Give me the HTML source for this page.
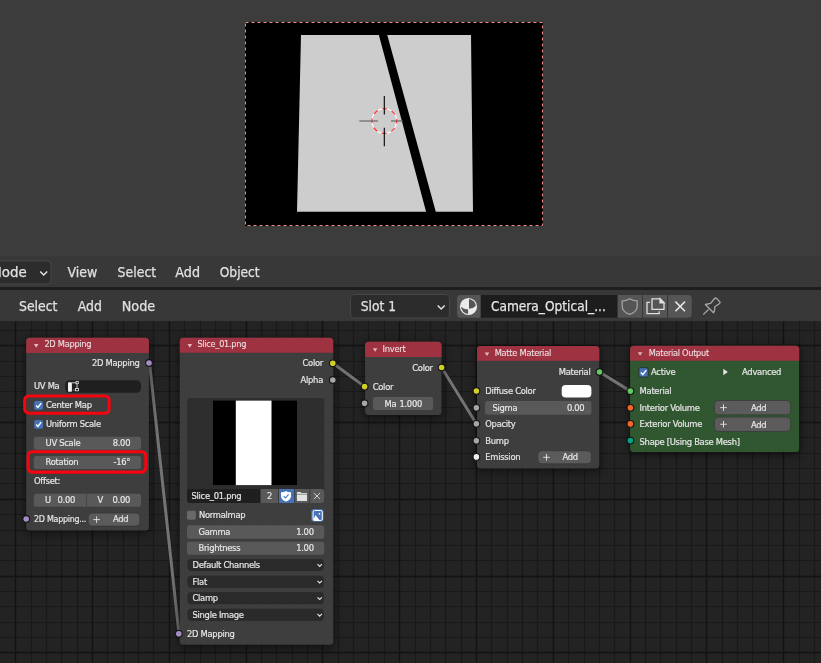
<!DOCTYPE html>
<html><head><meta charset="utf-8"><title>Blender node editor</title>
<style>
html,body{margin:0;padding:0;background:#232323;}
body{width:821px;height:663px;overflow:hidden;}
svg{display:block;will-change:transform;}
text{font-family:"DejaVu Sans", "Liberation Sans", sans-serif;}
text.c{font-family:"DejaVu Sans Condensed", "DejaVu Sans", "Liberation Sans", sans-serif;letter-spacing:-0.28px;stroke:#e6e6e6;stroke-width:0.2px;}
</style></head><body>
<svg width="821" height="663" viewBox="0 0 821 663">
<defs>
<filter id="sh" x="-20%" y="-20%" width="140%" height="140%"><feGaussianBlur stdDeviation="4"/></filter>
<clipPath id="ne"><rect x="0" y="321" width="821" height="342"/></clipPath>
</defs>

<rect x="0" y="0" width="821" height="256" fill="#3c3c3c"/>
<rect x="245" y="22" width="298" height="204" fill="#000000"/>
<polygon points="301,35 471,35 473,211.700 297,211.700" fill="#cdcdcd"/>
<polygon points="378.600,34 387,34 436,212.500 426.300,212.500" fill="#000"/>
<rect x="245.500" y="22.500" width="297" height="203" fill="none" stroke="#f48888" stroke-width="1" stroke-dasharray="3 3"/>
<g fill="none" stroke-width="1.1"><circle cx="384.3" cy="121.0" r="12.4" stroke="#ffffff"/><circle cx="384.3" cy="121.0" r="12.4" stroke="#ff2a2a" stroke-dasharray="4.87 4.87" stroke-dashoffset="2.4"/>
<path d="M384.3 96V114.5M384.3 127.7V146.2" stroke="#000"/><path d="M359.3 121.0H378M391 121.0H403" stroke="#555"/></g>
<rect x="0" y="256" width="821" height="31" fill="#383838"/>
<rect x="0" y="287" width="821" height="3" fill="#1e1e1e"/>
<rect x="0" y="290" width="821" height="31" fill="#383838"/>
<rect x="-10" y="261" width="61" height="23" rx="4" fill="#2c2c2c" stroke="#464646" stroke-width="1"/>
<text x="-9.8" y="276.8" font-size="14" fill="#e0e0e0" textLength="36.6" lengthAdjust="spacingAndGlyphs" stroke="#e0e0e0" stroke-width="0.25">Mode</text>
<path d="M40.200 271.400L43.700 275L47.200 271.400" fill="none" stroke="#e0e0e0" stroke-width="1.5"/>
<text x="67.5" y="276.8" font-size="14" fill="#e0e0e0" textLength="29.9" lengthAdjust="spacingAndGlyphs" stroke="#e0e0e0" stroke-width="0.25">View</text>
<text x="117.6" y="276.8" font-size="14" fill="#e0e0e0" textLength="38.6" lengthAdjust="spacingAndGlyphs" stroke="#e0e0e0" stroke-width="0.25">Select</text>
<text x="175.3" y="276.8" font-size="14" fill="#e0e0e0" textLength="24.7" lengthAdjust="spacingAndGlyphs" stroke="#e0e0e0" stroke-width="0.25">Add</text>
<text x="219.7" y="276.8" font-size="14" fill="#e0e0e0" textLength="40.0" lengthAdjust="spacingAndGlyphs" stroke="#e0e0e0" stroke-width="0.25">Object</text>
<text x="19" y="310.9" font-size="14" fill="#e0e0e0" textLength="38.4" lengthAdjust="spacingAndGlyphs" stroke="#e0e0e0" stroke-width="0.25">Select</text>
<text x="77.7" y="310.9" font-size="14" fill="#e0e0e0" textLength="24.3" lengthAdjust="spacingAndGlyphs" stroke="#e0e0e0" stroke-width="0.25">Add</text>
<text x="121.7" y="310.9" font-size="14" fill="#e0e0e0" textLength="33.5" lengthAdjust="spacingAndGlyphs" stroke="#e0e0e0" stroke-width="0.25">Node</text>
<rect x="350.500" y="294.500" width="99" height="23.500" rx="4" fill="#2c2c2c" stroke="#464646" stroke-width="1"/>
<text x="360.7" y="310.9" font-size="14" fill="#e0e0e0" textLength="35.3" lengthAdjust="spacingAndGlyphs" stroke="#e0e0e0" stroke-width="0.25">Slot 1</text>
<path d="M437.700 305.400L441.200 309L444.700 305.400" fill="none" stroke="#e0e0e0" stroke-width="1.5"/>
<path d="M461 295H480.400V317.700H461a4 4 0 0 1 -4 -4V299a4 4 0 0 1 4 -4z" fill="#555555"/>
<rect x="481" y="295" width="136.2" height="22.7" fill="#1d1d1d"/>
<rect x="617.9" y="295" width="24.1" height="22.7" fill="#555555"/>
<rect x="643" y="295" width="24" height="22.7" fill="#555555"/>
<path d="M668.100 295H687.800a4 4 0 0 1 4 4V313.700a4 4 0 0 1 -4 4H668.100z" fill="#555555"/>
<text x="490.9" y="310.9" font-size="14" fill="#e6e6e6" textLength="115" lengthAdjust="spacingAndGlyphs" stroke="#e0e0e0" stroke-width="0.25">Camera_Optical_...</text>
<g><circle cx="468.500" cy="306.500" r="8.600" fill="#ebebeb"/><path d="M469 299V308.800Q473.500 308.600 475.900 305.800A7.500 7.500 0 0 0 469 299z" fill="#555555"/><path d="M468.100 313.900V309.500Q463.500 309.300 461.100 306.700A7.500 7.500 0 0 0 468.100 313.900z" fill="#555555"/></g>
<path d="M629.700 298.700C627.500 300.300 624.800 300.900 622.200 300.900V306C622.200 310 625.500 313 629.700 314.300C633.900 313 637.200 310 637.200 306V300.900C634.600 300.900 631.900 300.300 629.700 298.700z" fill="none" stroke="#a2a2a2" stroke-width="1.300"/>
<g fill="none" stroke="#e0e0e0" stroke-width="1.300"><path d="M652 298.900H660L664 302.900V309.300H652z"/><path d="M660 298.900V302.900H664z" fill="#e0e0e0"/><path d="M650 302.400H647V313.700H659.200V311.300"/></g>
<path d="M675.400 301.600L685 311.200M685 301.600L675.400 311.200" stroke="#e6e6e6" stroke-width="1.500" fill="none"/>
<path d="M705.400 304.500L710.600 303.400L714.600 298.500Q715.500 297.600 716.400 298.200L719.900 301.900Q720.500 302.800 719.600 303.500L714.800 306.800L714.400 311.200L713.500 312.700zM708.500 309.500L703.200 314.600" fill="none" stroke="#a8a8a8" stroke-width="1.300" stroke-linejoin="round"/>
<rect x="0" y="321" width="821" height="342" fill="#232323"/>
<path d="M31.5 321V663M46.5 321V663M61.5 321V663M77.5 321V663M107.5 321V663M123.5 321V663M138.5 321V663M153.5 321V663M184.5 321V663M200.5 321V663M215.5 321V663M230.5 321V663M261.5 321V663M276.5 321V663M292.5 321V663M307.5 321V663M338.5 321V663M353.5 321V663M368.5 321V663M384.5 321V663M415.5 321V663M430.5 321V663M445.5 321V663M461.5 321V663M491.5 321V663M507.5 321V663M522.5 321V663M537.5 321V663M568.5 321V663M584.5 321V663M599.5 321V663M614.5 321V663M645.5 321V663M660.5 321V663M676.5 321V663M691.5 321V663M722.5 321V663M737.5 321V663M752.5 321V663M768.5 321V663M799.5 321V663M814.5 321V663M0 330.5H821M0 361.5H821M0 376.5H821M0 391.5H821M0 407.5H821M0 437.5H821M0 453.5H821M0 468.5H821M0 483.5H821M0 514.5H821M0 530.5H821M0 545.5H821M0 560.5H821M0 591.5H821M0 606.5H821M0 622.5H821M0 637.5H821" stroke="#191919" stroke-width="1.2" fill="none"/>
<path d="M15.5 321V663M92.5 321V663M169.5 321V663M246.5 321V663M322.5 321V663M399.5 321V663M476.5 321V663M553.5 321V663M630.5 321V663M706.5 321V663M783.5 321V663M0 345.5H821M0 422.5H821M0 499.5H821M0 576.5H821M0 652.5H821" stroke="#131313" stroke-width="1.4" fill="none"/>
<g clip-path="url(#ne)">
<path d="M149.5 363L179 633.5" stroke="#1c1c1c" stroke-width="4.400" fill="none" stroke-linecap="round" opacity="0.45"/>
<path d="M149.5 363L179 633.5" stroke="#747474" stroke-width="3" fill="none" stroke-linecap="round"/>
<path d="M333 363.3L364.6 386.6" stroke="#1c1c1c" stroke-width="4.400" fill="none" stroke-linecap="round" opacity="0.45"/>
<path d="M333 363.3L364.6 386.6" stroke="#747474" stroke-width="3" fill="none" stroke-linecap="round"/>
<path d="M441.6 367.5L476.4 423.8" stroke="#1c1c1c" stroke-width="4.400" fill="none" stroke-linecap="round" opacity="0.45"/>
<path d="M441.6 367.5L476.4 423.8" stroke="#747474" stroke-width="3" fill="none" stroke-linecap="round"/>
<path d="M599.5 372L630.4 391.1" stroke="#1c1c1c" stroke-width="4.400" fill="none" stroke-linecap="round" opacity="0.45"/>
<path d="M599.5 372L630.4 391.1" stroke="#747474" stroke-width="3" fill="none" stroke-linecap="round"/>
<rect x="25.2" y="338.7" width="124.7" height="194.7" rx="5" fill="#000" opacity="0.5" filter="url(#sh)"/>
<rect x="26.2" y="337.7" width="122.7" height="192.7" rx="3.5" fill="#424242" opacity="0.93"/>
<path d="M26.2 352.9V341.2a3.5 3.5 0 0 1 3.5 -3.5H145.4a3.5 3.5 0 0 1 3.5 3.5V352.9z" fill="#9e3240"/>
<path d="M33.900000000000006 344.1H38.5L36.2 347.7z" fill="#e0b8bd"/>
<text x="44.4" y="347.0" font-size="9.3" fill="#eedfe1" textLength="46.9" lengthAdjust="spacingAndGlyphs" class="c" style="stroke-width:0.1px">2D Mapping</text>
<text x="139.5" y="365.8" font-size="9.3" fill="#e6e6e6" text-anchor="end" class="c">2D Mapping</text>
<circle cx="149" cy="363" r="3.350" fill="#a68cc4" stroke="#151515" stroke-width="1.100"/>
<text x="34" y="389.1" font-size="9.3" fill="#e6e6e6" class="c">UV Ma</text>
<rect x="65" y="380.2" width="76" height="12.5" fill="#1f1f1f" rx="4.5"/>
<g><rect x="68" y="382.300" width="3.900" height="9.500" rx="0.800" fill="#f0f0f0"/><path d="M71.900 382.800H77V389" fill="none" stroke="#e0e0e0" stroke-width="0.900"/><rect x="76" y="381.400" width="2.300" height="2.300" fill="#1f1f1f" stroke="#e6e6e6" stroke-width="0.800"/><rect x="75.400" y="388.500" width="3" height="2.300" fill="#1f1f1f" stroke="#e6e6e6" stroke-width="0.800"/><path d="M72.800 390H74.800" stroke="#a0a0a0" stroke-width="0.800"/></g>
<rect x="34.2" y="400.9" width="8.8" height="8.8" fill="#4772b3" rx="1.8"/>
<path d="M36.10 405.50L37.90 407.40L41.20 403.20" fill="none" stroke="#fff" stroke-width="1.4"/>
<text x="46" y="407.7" font-size="9.3" fill="#e6e6e6" class="c">Center Map</text>
<rect x="34.2" y="420" width="8.8" height="8.8" fill="#4772b3" rx="1.8"/>
<path d="M36.10 424.60L37.90 426.50L41.20 422.30" fill="none" stroke="#fff" stroke-width="1.4"/>
<text x="46" y="426.6" font-size="9.3" fill="#e6e6e6" class="c">Uniform Scale</text>
<rect x="33.8" y="436.8" width="107.2" height="13" fill="#595959" rx="2.5"/>
<text x="45.599999999999994" y="446.1" font-size="9.3" fill="#e6e6e6" class="c">UV Scale</text>
<text x="130.2" y="446.1" font-size="9.3" fill="#e6e6e6" text-anchor="end" class="c">8.00</text>
<rect x="33.8" y="455.9" width="107.2" height="13" fill="#595959" rx="2.5"/>
<text x="45.599999999999994" y="465.2" font-size="9.3" fill="#e6e6e6" class="c">Rotation</text>
<text x="130.2" y="465.2" font-size="9.3" fill="#e6e6e6" text-anchor="end" class="c">-16°</text>
<text x="34" y="483.6" font-size="9.3" fill="#e6e6e6" class="c">Offset:</text>
<path d="M36.300 493.800H86.200V506.800H36.300a2.500 2.500 0 0 1 -2.500 -2.500V496.300a2.500 2.500 0 0 1 2.500 -2.500z" fill="#595959"/>
<path d="M86.900 493.800H138.500a2.500 2.500 0 0 1 2.500 2.500V504.300a2.500 2.500 0 0 1 -2.500 2.500H86.900z" fill="#595959"/>
<text x="45" y="502.6" font-size="9.3" fill="#e6e6e6" class="c">U</text>
<text x="75" y="502.6" font-size="9.3" fill="#e6e6e6" text-anchor="end" class="c">0.00</text>
<text x="97.5" y="502.6" font-size="9.3" fill="#e6e6e6" class="c">V</text>
<text x="130" y="502.6" font-size="9.3" fill="#e6e6e6" text-anchor="end" class="c">0.00</text>
<circle cx="26.2" cy="519" r="3.350" fill="#a68cc4" stroke="#151515" stroke-width="1.100"/>
<text x="34" y="521.6" font-size="9.3" fill="#e6e6e6" textLength="52" lengthAdjust="spacingAndGlyphs" class="c">2D Mapping...</text>
<rect x="88.2" y="513.1" width="51.7" height="13" fill="#5b5b5b" rx="4" stroke="#303030" stroke-width="0.6"/>
<path d="M93.3 519.6H99.89999999999999M96.6 516.3000000000001V522.9" stroke="#e6e6e6" stroke-width="0.9" fill="none"/>
<text x="113" y="522.2" font-size="9.3" fill="#e6e6e6" class="c">Add</text>
<rect x="178.8" y="338.7" width="155.4" height="309" rx="5" fill="#000" opacity="0.5" filter="url(#sh)"/>
<rect x="179.8" y="337.7" width="153.4" height="307" rx="3.5" fill="#424242" opacity="0.93"/>
<path d="M179.8 352.7V341.2a3.5 3.5 0 0 1 3.5 -3.5H329.70000000000005a3.5 3.5 0 0 1 3.5 3.5V352.7z" fill="#9e3240"/>
<path d="M187.5 344.1H192.10000000000002L189.8 347.7z" fill="#e0b8bd"/>
<text x="197.4" y="346.9" font-size="9.3" fill="#eedfe1" textLength="48.7" lengthAdjust="spacingAndGlyphs" class="c" style="stroke-width:0.1px">Slice_01.png</text>
<text x="323" y="366.1" font-size="9.3" fill="#e6e6e6" text-anchor="end" class="c">Color</text>
<circle cx="332.8" cy="363.3" r="3.350" fill="#d0d02a" stroke="#151515" stroke-width="1.100"/>
<text x="323" y="382.8" font-size="9.3" fill="#e6e6e6" text-anchor="end" class="c">Alpha</text>
<circle cx="332.8" cy="380" r="3.350" fill="#a6a6a6" stroke="#151515" stroke-width="1.100"/>
<rect x="187" y="398" width="137.2" height="105" fill="#2e2e2e" rx="3"/>
<rect x="213" y="400.6" width="84" height="84.5" fill="#000"/>
<rect x="235.8" y="400.6" width="35.7" height="84.5" fill="#fff"/>
<path d="M190 489H260V503H190a3 3 0 0 1 -3 -3V492a3 3 0 0 1 3 -3z" fill="#1f1f1f"/>
<text x="191.5" y="498.9" font-size="9.3" fill="#e6e6e6" class="c">Slice_01.png</text>
<rect x="260.7" y="489" width="17.5" height="14" fill="#595959"/>
<text x="269.4" y="498.9" font-size="9.3" fill="#e6e6e6" text-anchor="middle" class="c">2</text>
<rect x="279" y="489" width="15.3" height="14" fill="#4772b3"/>
<path d="M286 490.900c1.700 1 3.400 1.400 5 1.400v3.700c0 2.900-2.300 4.800-5 5.500c-2.700-.700-5-2.600-5-5.500v-3.700c1.600 0 3.300-.400 5-1.400z" fill="#fff"/><path d="M283.700 496.200L285.500 498L288.600 494.300" fill="none" stroke="#4772b3" stroke-width="1.100"/>
<rect x="295" y="489" width="14.5" height="14" fill="#595959"/>
<path d="M296.900 492h3.600l.900 1.100h5.600v7.900h-10.100z" fill="#e2e2e2"/><path d="M296.900 494.300h10.100" stroke="#595959" stroke-width="0.600"/>
<path d="M310.200 489H321.200a3 3 0 0 1 3 3V500a3 3 0 0 1 -3 3H310.200z" fill="#595959"/>
<path d="M313.900 493L320 499.100M320 493L313.900 499.100" stroke="#d4d4d4" stroke-width="1" fill="none"/>
<rect x="186.9" y="510.8" width="9" height="9" fill="#686868" rx="1.8"/>
<text x="199" y="518.1" font-size="9.3" fill="#e6e6e6" class="c">Normalmap</text>
<rect x="311.2" y="509.1" width="12.4" height="12.7" fill="#4772b3" rx="2.8"/>
<rect x="313.100" y="510.500" width="9.200" height="10" rx="1.500" fill="none" stroke="#fff" stroke-width="1"/><path d="M312.900 520.300L315.500 515L319.600 520.300z" fill="#fff"/><rect x="318.700" y="513" width="1.500" height="1.500" fill="#fff"/>
<rect x="187" y="525.2" width="137.2" height="13.5" fill="#595959" rx="2.5"/>
<text x="198.5" y="534.75" font-size="9.3" fill="#e6e6e6" class="c">Gamma</text>
<text x="313.7" y="534.75" font-size="9.3" fill="#e6e6e6" text-anchor="end" class="c">1.00</text>
<rect x="187" y="541.8" width="137.2" height="13" fill="#595959" rx="2.5"/>
<text x="198.5" y="551.1" font-size="9.3" fill="#e6e6e6" class="c">Brightness</text>
<text x="313.7" y="551.1" font-size="9.3" fill="#e6e6e6" text-anchor="end" class="c">1.00</text>
<rect x="187" y="558.6" width="137.2" height="13" fill="#2a2a2a" rx="4" stroke="#484848" stroke-width="0.5"/>
<text x="192.5" y="567.9" font-size="9.3" fill="#e6e6e6" class="c">Default Channels</text>
<path d="M317.5 564.2L319.7 566.4000000000001L321.9 564.2" fill="none" stroke="#e6e6e6" stroke-width="1.1"/>
<rect x="187" y="575.2" width="137.2" height="13" fill="#2a2a2a" rx="4" stroke="#484848" stroke-width="0.5"/>
<text x="192.5" y="584.5" font-size="9.3" fill="#e6e6e6" class="c">Flat</text>
<path d="M317.5 580.8000000000001L319.7 583.0000000000001L321.9 580.8000000000001" fill="none" stroke="#e6e6e6" stroke-width="1.1"/>
<rect x="187" y="591.7" width="137.2" height="13" fill="#2a2a2a" rx="4" stroke="#484848" stroke-width="0.5"/>
<text x="192.5" y="601.0" font-size="9.3" fill="#e6e6e6" class="c">Clamp</text>
<path d="M317.5 597.3000000000001L319.7 599.5000000000001L321.9 597.3000000000001" fill="none" stroke="#e6e6e6" stroke-width="1.1"/>
<rect x="187" y="608.3" width="137.2" height="13" fill="#2a2a2a" rx="4" stroke="#484848" stroke-width="0.5"/>
<text x="192.5" y="617.6" font-size="9.3" fill="#e6e6e6" class="c">Single Image</text>
<path d="M317.5 613.9L319.7 616.1L321.9 613.9" fill="none" stroke="#e6e6e6" stroke-width="1.1"/>
<circle cx="178.8" cy="633.7" r="3.350" fill="#a68cc4" stroke="#151515" stroke-width="1.100"/>
<text x="187" y="636.5" font-size="9.3" fill="#e6e6e6" class="c">2D Mapping</text>
<rect x="364.1" y="342.8" width="78.4" height="75.2" rx="5" fill="#000" opacity="0.5" filter="url(#sh)"/>
<rect x="365.1" y="341.8" width="76.4" height="73.2" rx="3.5" fill="#424242" opacity="0.93"/>
<path d="M365.1 357.0V345.3a3.5 3.5 0 0 1 3.5 -3.5H438.0a3.5 3.5 0 0 1 3.5 3.5V357.0z" fill="#9e3240"/>
<path d="M372.8 348.20000000000005H377.40000000000003L375.1 351.8z" fill="#e0b8bd"/>
<text x="382.5" y="351.9" font-size="9.3" fill="#eedfe1" class="c" style="stroke-width:0.1px">Invert</text>
<text x="432.7" y="370.8" font-size="9.3" fill="#e6e6e6" text-anchor="end" class="c">Color</text>
<circle cx="441.6" cy="367.5" r="3.350" fill="#d0d02a" stroke="#151515" stroke-width="1.100"/>
<circle cx="364.6" cy="386.6" r="3.350" fill="#d0d02a" stroke="#151515" stroke-width="1.100"/>
<text x="372.7" y="390.3" font-size="9.3" fill="#e6e6e6" class="c">Color</text>
<circle cx="364.6" cy="403.3" r="3.350" fill="#a6a6a6" stroke="#151515" stroke-width="1.100"/>
<rect x="373" y="397" width="60.1" height="12.9" fill="#595959" rx="2.5"/>
<text x="384.5" y="406.5" font-size="9.3" fill="#e6e6e6" class="c">Ma</text>
<text x="422" y="406.5" font-size="9.3" fill="#e6e6e6" text-anchor="end" class="c">1.000</text>
<rect x="476" y="347.1" width="124.3" height="124.4" rx="5" fill="#000" opacity="0.5" filter="url(#sh)"/>
<rect x="477" y="346.1" width="122.3" height="122.4" rx="3.5" fill="#424242" opacity="0.93"/>
<path d="M477 360.70000000000005V349.6a3.5 3.5 0 0 1 3.5 -3.5H595.8a3.5 3.5 0 0 1 3.5 3.5V360.70000000000005z" fill="#9e3240"/>
<path d="M484.7 352.50000000000006H489.3L487 356.1z" fill="#e0b8bd"/>
<text x="494.7" y="355.8" font-size="9.3" fill="#eedfe1" textLength="56.3" lengthAdjust="spacingAndGlyphs" class="c" style="stroke-width:0.1px">Matte Material</text>
<text x="590.5" y="374.8" font-size="9.3" fill="#e6e6e6" text-anchor="end" class="c">Material</text>
<circle cx="599.5" cy="372" r="3.350" fill="#63c763" stroke="#151515" stroke-width="1.100"/>
<circle cx="476.4" cy="391" r="3.350" fill="#d0d02a" stroke="#151515" stroke-width="1.100"/>
<text x="485.3" y="393.8" font-size="9.3" fill="#e6e6e6" class="c">Diffuse Color</text>
<rect x="561.7" y="385" width="29.7" height="12.6" fill="#ffffff" rx="4"/>
<circle cx="476.4" cy="407.8" r="3.350" fill="#a6a6a6" stroke="#151515" stroke-width="1.100"/>
<rect x="485" y="401.1" width="106.4" height="13.6" fill="#595959" rx="2.5"/>
<text x="492.5" y="410.7" font-size="9.3" fill="#e6e6e6" class="c">Sigma</text>
<text x="584.4" y="410.7" font-size="9.3" fill="#e6e6e6" text-anchor="end" class="c">0.00</text>
<circle cx="476.4" cy="423.8" r="3.350" fill="#a6a6a6" stroke="#151515" stroke-width="1.100"/>
<text x="485.3" y="426.6" font-size="9.3" fill="#e6e6e6" class="c">Opacity</text>
<circle cx="476.4" cy="440.8" r="3.350" fill="#a6a6a6" stroke="#151515" stroke-width="1.100"/>
<text x="485.3" y="443.6" font-size="9.3" fill="#e6e6e6" class="c">Bump</text>
<circle cx="476.4" cy="456.9" r="3.350" fill="#f0f0f0" stroke="#151515" stroke-width="1.100"/>
<text x="485.3" y="459.7" font-size="9.3" fill="#e6e6e6" class="c">Emission</text>
<rect x="537.8" y="450.8" width="53.6" height="13" fill="#5b5b5b" rx="4" stroke="#303030" stroke-width="0.6"/>
<path d="M543.2 457.3H549.8M546.5 454.0V460.6" stroke="#e6e6e6" stroke-width="0.9" fill="none"/>
<text x="562.5" y="460.1" font-size="9.3" fill="#e6e6e6" class="c">Add</text>
<rect x="629.1" y="346.8" width="171.1" height="108.2" rx="5" fill="#000" opacity="0.5" filter="url(#sh)"/>
<rect x="630.1" y="345.8" width="169.1" height="106.2" rx="3.5" fill="#335d33" opacity="0.93"/>
<path d="M630.1 360.7V349.3a3.5 3.5 0 0 1 3.5 -3.5H795.7a3.5 3.5 0 0 1 3.5 3.5V360.7z" fill="#9e3240"/>
<path d="M637.8000000000001 352.20000000000005H642.4L640.1 355.8z" fill="#e0b8bd"/>
<text x="648.7" y="355.8" font-size="9.3" fill="#eedfe1" textLength="60.2" lengthAdjust="spacingAndGlyphs" class="c" style="stroke-width:0.1px">Material Output</text>
<rect x="638.9" y="367.7" width="9.3" height="9.3" fill="#4772b3" rx="1.8"/>
<path d="M640.91 372.56L642.81 374.57L646.30 370.13" fill="none" stroke="#fff" stroke-width="1.4"/>
<rect x="638.900" y="367.700" width="9.300" height="9.300" rx="1.800" fill="none" stroke="#2a2f2a" stroke-width="0.900"/>
<text x="651.1" y="374.8" font-size="9.3" fill="#e6e6e6" class="c">Active</text>
<path d="M723.300 368.800L727.800 372L723.300 375.200z" fill="#e6e6e6"/>
<text x="742.1" y="374.8" font-size="9.3" fill="#e6e6e6" class="c">Advanced</text>
<circle cx="630.4" cy="391.1" r="3.350" fill="#63c763" stroke="#151515" stroke-width="1.100"/>
<text x="639.6" y="393.9" font-size="9.3" fill="#e6e6e6" class="c">Material</text>
<circle cx="630.4" cy="407.8" r="3.350" fill="#f2662e" stroke="#151515" stroke-width="1.100"/>
<text x="639.6" y="410.6" font-size="9.3" fill="#e6e6e6" class="c">Interior Volume</text>
<rect x="714.4" y="400.5" width="76.2" height="14.3" fill="#5b5b5b" rx="4" stroke="#303030" stroke-width="0.6"/>
<path d="M720.2 407.65H726.8M723.5 404.34999999999997V410.95" stroke="#e6e6e6" stroke-width="0.9" fill="none"/>
<text x="751" y="411.35" font-size="9.3" fill="#e6e6e6" class="c">Add</text>
<circle cx="630.4" cy="423.9" r="3.350" fill="#f2662e" stroke="#151515" stroke-width="1.100"/>
<text x="639.6" y="426.7" font-size="9.3" fill="#e6e6e6" class="c">Exterior Volume</text>
<rect x="714.4" y="417.1" width="76.2" height="14.3" fill="#5b5b5b" rx="4" stroke="#303030" stroke-width="0.6"/>
<path d="M720.2 424.25H726.8M723.5 420.95V427.55" stroke="#e6e6e6" stroke-width="0.9" fill="none"/>
<text x="751" y="427.95" font-size="9.3" fill="#e6e6e6" class="c">Add</text>
<circle cx="630.4" cy="440.6" r="3.350" fill="#00a388" stroke="#151515" stroke-width="1.100"/>
<text x="639.6" y="444.5" font-size="9.3" fill="#e6e6e6" class="c">Shape [Using Base Mesh]</text>
<rect x="24.700" y="396" width="84.400" height="17.200" rx="4" fill="none" stroke="#f5050f" stroke-width="3.100"/>
<rect x="28.100" y="451.700" width="117.700" height="20.400" rx="4" fill="none" stroke="#f5050f" stroke-width="3.100"/>
</g>
</svg></body></html>
